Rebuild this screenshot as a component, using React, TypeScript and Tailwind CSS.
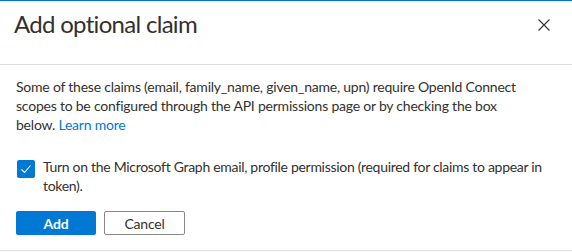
const App = () => {
  return (
    <div
      className="w-[572px] h-[252px] bg-white border-t border-[#0078d4] text-[#323130] overflow-hidden"
      style={{ fontFamily: "Lato, 'Open Sans', sans-serif" }}
    >
      {/* Header */}
      <div className="h-[64px] flex justify-between items-start border-b border-[#e1dfdd] pl-[14px] pr-[22px]">
        <h1 className="pt-[7px] text-[24px] leading-[32px] font-normal tracking-[-0.7px]">Add optional claim</h1>
        <button className="mt-[18px] p-0 text-[#323130]" aria-label="Close">
          <svg width="12" height="12" viewBox="0 0 12 12" fill="none" stroke="currentColor" strokeWidth="1.1">
            <path d="M0.5 0.5L11.5 11.5M11.5 0.5L0.5 11.5" />
          </svg>
        </button>
      </div>

      {/* Body */}
      <div className="px-4 pt-[12px] text-[14px] leading-[19px] tracking-[-0.22px]">
        <p className="whitespace-nowrap">
          Some of these claims (email, family_name, given_name, upn) require OpenId Connect
          <br />
          scopes to be configured through the API permissions page or by checking the box
          <br />
          below.{" "}
          <a href="#" className="text-[#0078d4]">
            Learn more
          </a>
        </p>

        <label className="mt-[23px] flex items-start gap-[8px]">
          <span className="mt-[3px] ml-[1px] w-[18px] h-[18px] shrink-0 rounded-[2px] bg-[#0078d4] flex items-center justify-center">
            <svg width="12" height="12" viewBox="0 0 12 12" fill="none" stroke="white" strokeWidth="1.1">
              <path d="M1.5 6.5L4.5 9.5L10.5 2.5" />
            </svg>
          </span>
          <span className="whitespace-nowrap tracking-[-0.3px]">
            Turn on the Microsoft Graph email, profile permission (required for claims to appear in
            <br />
            token).
          </span>
        </label>
      </div>

      <div className="mt-[16px] flex gap-2 pb-[15px] border-b border-[#e1dfdd] px-4 text-[14px] tracking-[-0.2px]">
        <button className="w-[80px] h-[24px] rounded-[2px] bg-[#0078d4] text-white font-bold">Add</button>
        <button className="w-[81px] h-[24px] rounded-[2px] border border-[#8a8886] bg-white text-[#323130]">
          Cancel
        </button>
      </div>
    </div>
  );
};

export default App;
